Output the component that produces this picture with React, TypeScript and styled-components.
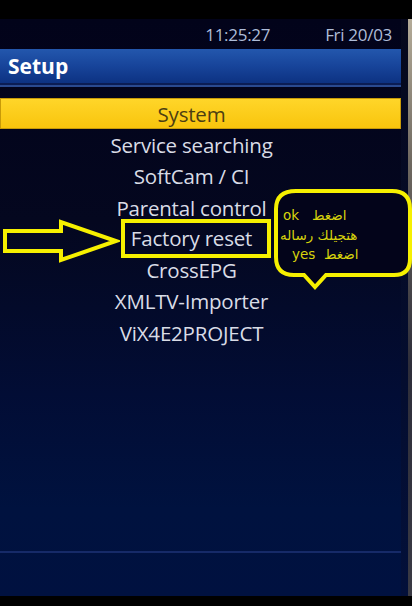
import React from 'react';
import styled, { createGlobalStyle } from 'styled-components';

const GlobalStyle = createGlobalStyle`
    html, body {
        margin: 0;
        padding: 0;
        background: #000;
    }
`;

const Page = styled.div`
    position: relative;
    width: 412px;
    height: 606px;
    background: #000;
    display: flex;
    flex-direction: column;
    overflow: hidden;
    font-family: 'Open Sans', 'DejaVu Sans', sans-serif;
`;

const TopBlack = styled.div`
    height: 19px;
    flex-shrink: 0;
`;

const ScreenRow = styled.div`
    display: flex;
    height: 577px;
`;

const Screen = styled.div`
    flex: 1;
    display: flex;
    flex-direction: column;
    background: linear-gradient(#02031a 0%, #04071f 35%, #020d35 65%, #00123f 85%, #001140 100%);
`;

const Edge = styled.div`
    width: 11px;
    display: flex;
`;

const EdgeDark = styled.div`
    width: 7px;
    background: linear-gradient(#06081c, #03103a);
`;

const EdgeLight = styled.div`
    flex: 1;
    background: linear-gradient(#b4ab98 0%, #6e6860 25%, #2e2e3a 60%, #3a3a44 100%);
`;

const Clock = styled.div`
    height: 30px;
    display: flex;
    justify-content: flex-end;
    align-items: center;
    gap: 55px;
    padding-right: 9px;
    color: #aebcd8;
    font-size: 17px;
    letter-spacing: -0.3px;
`;

const TitleBar = styled.div`
    height: 36px;
    width: 401px;
    display: flex;
    align-items: center;
    padding-left: 8px;
    box-sizing: border-box;
    background: linear-gradient(#2357ad 0%, #17449a 50%, #0d3282 100%);
    color: #fff;
    font-weight: 700;
    font-size: 21px;
    border-bottom: 2px solid #0b1d55;
    box-shadow: 0 2px 0 #2a4a90;
`;

const Menu = styled.div`
    margin-top: 13px;
    display: flex;
    flex-direction: column;
    width: 401px;
`;

const Item = styled.div<{ $selected?: boolean }>`
    height: 31.3px;
    display: flex;
    align-items: center;
    justify-content: center;
    padding-right: 18px;
    font-size: 20.5px;
    letter-spacing: -0.2px;
    color: ${(p) => (p.$selected ? '#4d3e12' : '#d9dce6')};
    background: ${(p) => (p.$selected ? 'linear-gradient(#ffd62a, #f8c40c)' : 'transparent')};
    box-shadow: ${(p) => (p.$selected ? 'inset 0 0 0 1px #c89a08' : 'none')};
`;

const Label = styled.span<{ $boxed?: boolean }>`
    ${(p) =>
        p.$boxed &&
        `
        padding: 0 15px 0 6px;
        margin: 0 -15px 0 -6px;
        outline: 4px solid #f6f000;
        outline-offset: 0px;
        line-height: 31px;
    `}
`;

const Spacer = styled.div`
    flex: 1;
`;

const FooterLine = styled.div`
    width: 401px;
    height: 2px;
    background: #162a68;
    margin-bottom: 43px;
`;

const BottomBlack = styled.div`
    flex: 1;
`;

const Arrow = styled.svg`
    position: absolute;
    left: 0;
    top: 218px;
`;

const Bubble = styled.div`
    position: absolute;
    left: 274px;
    top: 189px;
    width: 140px;
    height: 102px;
`;

const BubbleShape = styled.svg`
    position: absolute;
    left: 0;
    top: 0;
`;

const BubbleText = styled.div`
    position: relative;
    padding-top: 17px;
    display: flex;
    flex-direction: column;
    font-family: 'DejaVu Sans', sans-serif;
    font-size: 13.5px;
    color: #d8d40c;
    line-height: 19.5px;
`;

const Line = styled.div<{ $left: number }>`
    padding-left: ${(p) => p.$left}px;
    direction: rtl;
    text-align: left;
    unicode-bidi: plaintext;
`;

const items = [
    'System',
    'Service searching',
    'SoftCam / CI',
    'Parental control',
    'Factory reset',
    'CrossEPG',
    'XMLTV-Importer',
    'ViX4E2PROJECT',
];

export default function App() {
    return (
        <Page>
            <GlobalStyle />
            <TopBlack />
            <ScreenRow>
                <Screen>
                    <Clock>
                        <span>11:25:27</span>
                        <span>Fri 20/03</span>
                    </Clock>
                    <TitleBar>Setup</TitleBar>
                    <Menu>
                        {items.map((name, i) => (
                            <Item key={name} $selected={i === 0}>
                                <Label $boxed={name === 'Factory reset'}>{name}</Label>
                            </Item>
                        ))}
                    </Menu>
                    <Spacer />
                    <FooterLine />
                </Screen>
                <Edge>
                    <EdgeDark />
                    <EdgeLight />
                </Edge>
            </ScreenRow>
            <BottomBlack />

            <Arrow width="120" height="46" viewBox="0 0 120 46">
                <path
                    d="M5 13 H61 V4 L116 23 L61 42 V33 H5 Z"
                    fill="none"
                    stroke="#f6f000"
                    strokeWidth="4"
                    strokeLinejoin="miter"
                />
            </Arrow>

            <Bubble>
                <BubbleShape width="140" height="102" viewBox="0 0 140 102">
                    <path
                        d="M22 2 H118 Q136 2 136 20 V70 Q136 86 120 86 H52 L41 98 L30 86 H20 Q2 86 2 68 V20 Q2 2 22 2 Z"
                        fill="#03041a"
                        stroke="#f6f000"
                        strokeWidth="4"
                    />
                </BubbleShape>
                <BubbleText>
                    <Line $left={9}>اضغط&nbsp;&nbsp;&nbsp;ok</Line>
                    <Line $left={6}>هتجيلك رساله</Line>
                    <Line $left={18}>yes&nbsp;&nbsp;اضغط</Line>
                </BubbleText>
            </Bubble>
        </Page>
    );
}
